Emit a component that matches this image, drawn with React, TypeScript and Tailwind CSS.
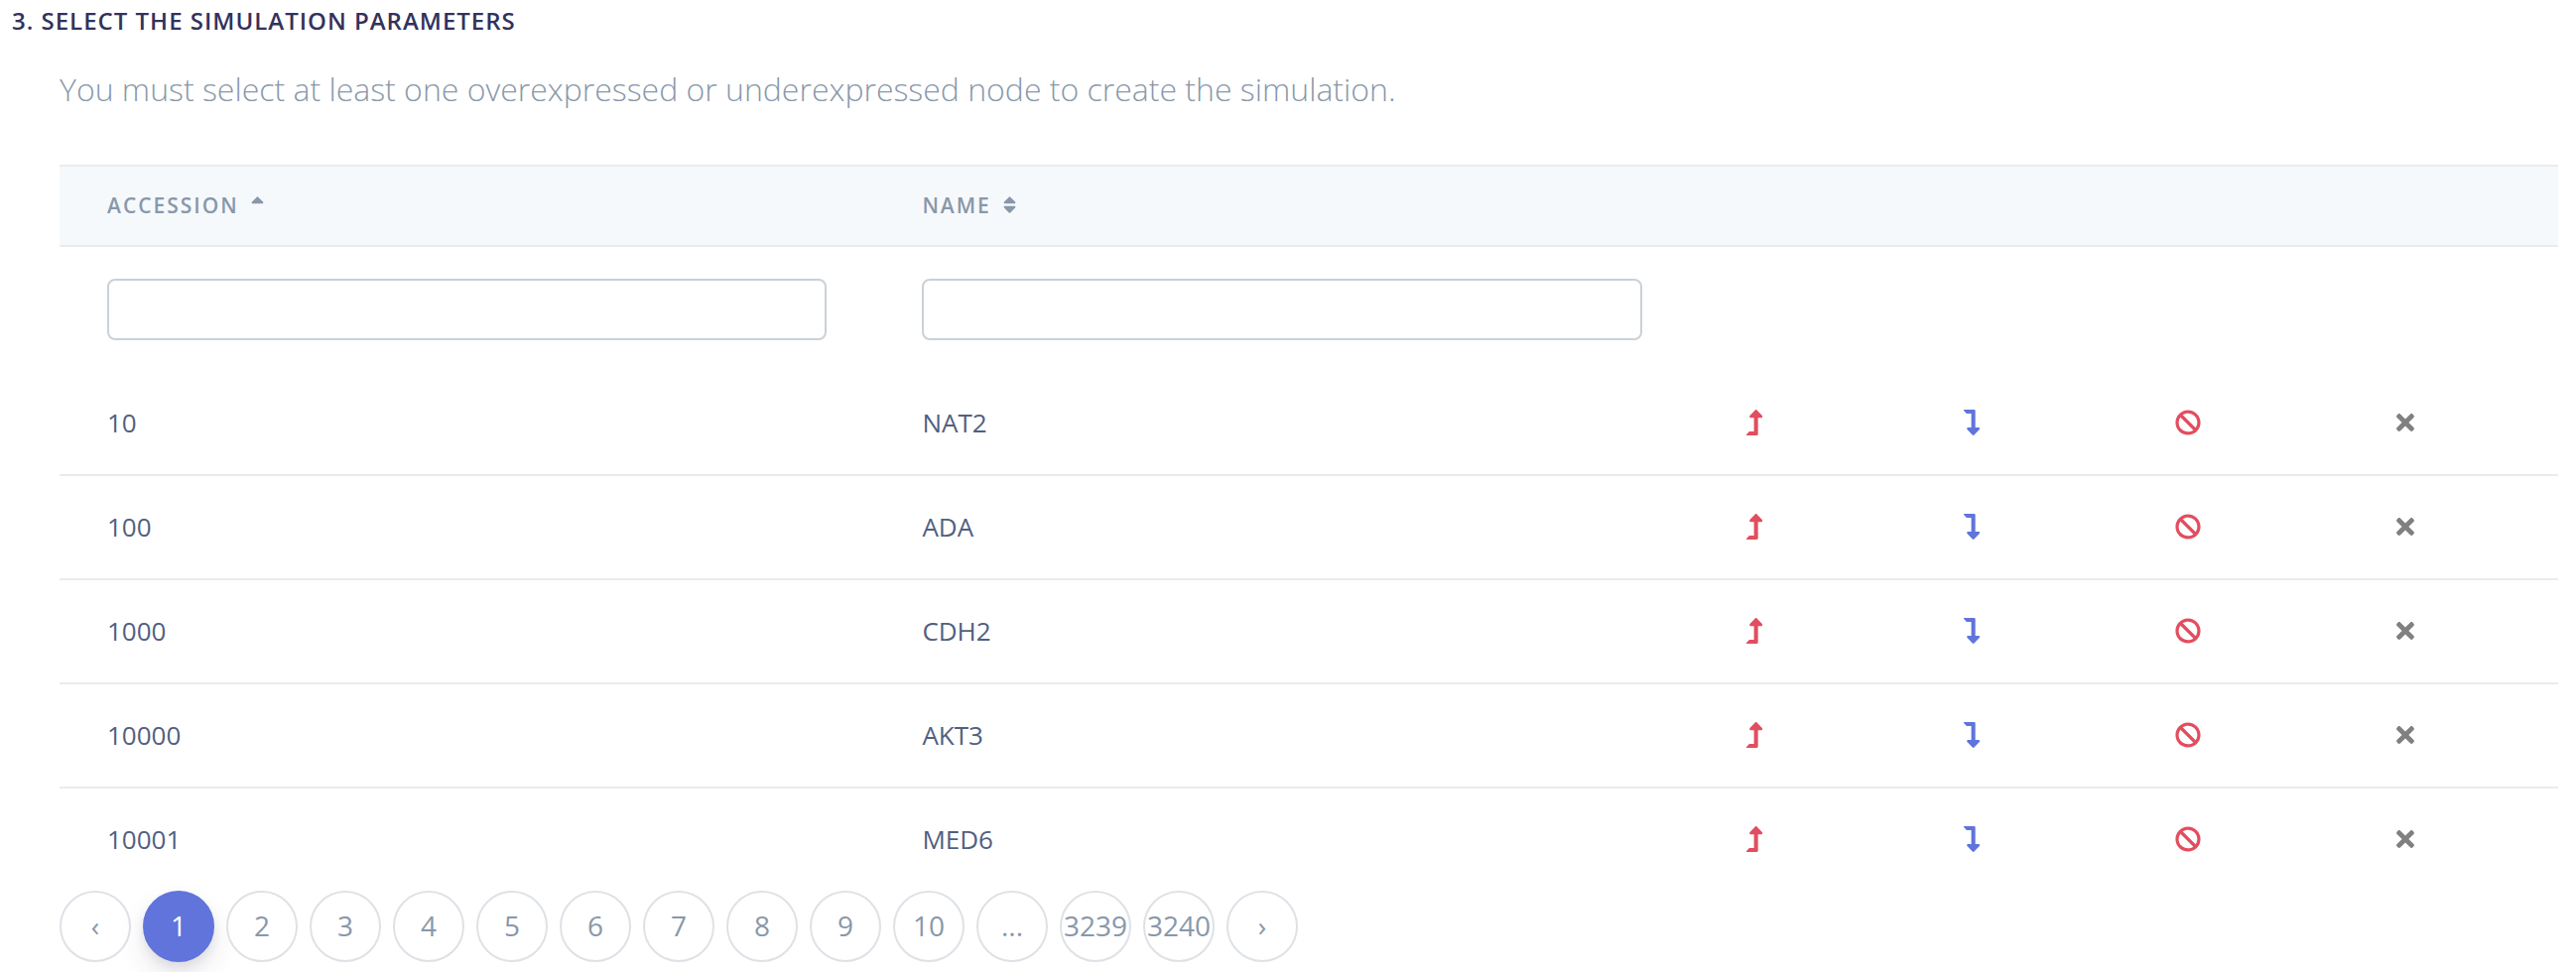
import { useState } from "react";
import { FaBan, FaLevelDownAlt, FaLevelUpAlt, FaSort, FaSortUp, FaTimes } from "react-icons/fa";

const nodes = [
  { accession: "10", name: "NAT2" },
  { accession: "100", name: "ADA" },
  { accession: "1000", name: "CDH2" },
  { accession: "10000", name: "AKT3" },
  { accession: "10001", name: "MED6" },
];

const actions = [
  { label: "Overexpress", Icon: FaLevelUpAlt, color: "text-[#e34d5f]" },
  { label: "Underexpress", Icon: FaLevelDownAlt, color: "text-[#6074dc]" },
  { label: "Knock out", Icon: FaBan, color: "text-[#e34d5f]" },
  { label: "Clear", Icon: FaTimes, color: "text-[#808080]" },
];

const columns = [
  { label: "Accession", Icon: FaSortUp },
  { label: "Name", Icon: FaSort },
];

const pages = ["‹", "1", "2", "3", "4", "5", "6", "7", "8", "9", "10", "...", "3239", "3240", "›"];

function NodeTable() {
  return (
    <table className="w-full table-fixed border-separate border-spacing-0 text-left">
      <colgroup>
        <col />
        <col />
        {actions.map((a) => (
          <col key={a.label} className="w-[8.69%]" />
        ))}
      </colgroup>
      <thead>
        <tr className="h-[83px] bg-[#f6f9fc]">
          {columns.map(({ label, Icon }) => (
            <th key={label} className="border-y-2 border-[#e9ecef] px-12 pt-0 pb-0.5 align-middle">
              <button
                type="button"
                className="flex items-center gap-2 text-[21px] leading-8 font-semibold tracking-[2px] text-[#8898aa] uppercase"
              >
                {label}
                <Icon />
              </button>
            </th>
          ))}
          <td colSpan={4} className="border-y-2 border-[#e9ecef]" />
        </tr>
      </thead>
      <tbody>
        <tr>
          {columns.map(({ label }) => (
            <td key={label} className="px-12 py-8">
              <input
                type="text"
                aria-label={`Filter by ${label.toLowerCase()}`}
                className="block h-[62px] w-full rounded-lg border-2 border-[#cad1d7] bg-white px-4 text-[26px] text-[#525f7f]"
              />
            </td>
          ))}
          <td colSpan={4} />
        </tr>
        {nodes.map((node) => (
          <tr
            key={node.accession}
            className="h-[105px] text-[26px] leading-10 text-[#525f7f] last:h-[103px] [&:not(:last-child)>td]:border-b-2 [&>td]:border-[#e9ecef]"
          >
            <td className="px-12 pb-0.5">{node.accession}</td>
            <td className="px-12 pb-0.5">{node.name}</td>
            {actions.map(({ label, Icon, color }) => (
              <td key={label} className="px-12 pb-0.5">
                <button
                  type="button"
                  aria-label={`${label} ${node.name}`}
                  className={`flex w-[34px] justify-center ${color}`}
                >
                  <Icon />
                </button>
              </td>
            ))}
          </tr>
        ))}
      </tbody>
    </table>
  );
}

function Pagination() {
  const [current, setCurrent] = useState("1");
  return (
    <nav aria-label="Pages" className="flex gap-3">
      {pages.map((page) => (
        <button
          key={page}
          type="button"
          onClick={() => /^\d+$/.test(page) && setCurrent(page)}
          className={`flex size-[72px] shrink-0 items-center justify-center rounded-full border-2 pb-0.5 text-[28px] leading-10 ${
            page === current
              ? "border-[#6074dc] bg-[#6074dc] text-white shadow-[0_14px_28px_rgba(50,50,93,0.1),0_6px_12px_rgba(0,0,0,0.08)]"
              : "border-[#dee2e6] bg-white text-[#8898aa]"
          }`}
        >
          {page}
        </button>
      ))}
    </nav>
  );
}

export default function App() {
  return (
    <main className="min-h-screen bg-white pb-2 font-['Open_Sans',sans-serif]">
      <h2 className="pl-3 text-[24px] leading-[42px] font-semibold tracking-[1px] text-[#32325d] uppercase">
        3. Select the simulation parameters
      </h2>
      <section className="pr-[18px] pl-[60px]">
        <p className="mt-5 mb-12 text-[32px] leading-[56px] font-light text-[#8898aa]">
          You must select at least one overexpressed or underexpressed node to create the simulation.
        </p>
        <NodeTable />
        <Pagination />
      </section>
    </main>
  );
}
